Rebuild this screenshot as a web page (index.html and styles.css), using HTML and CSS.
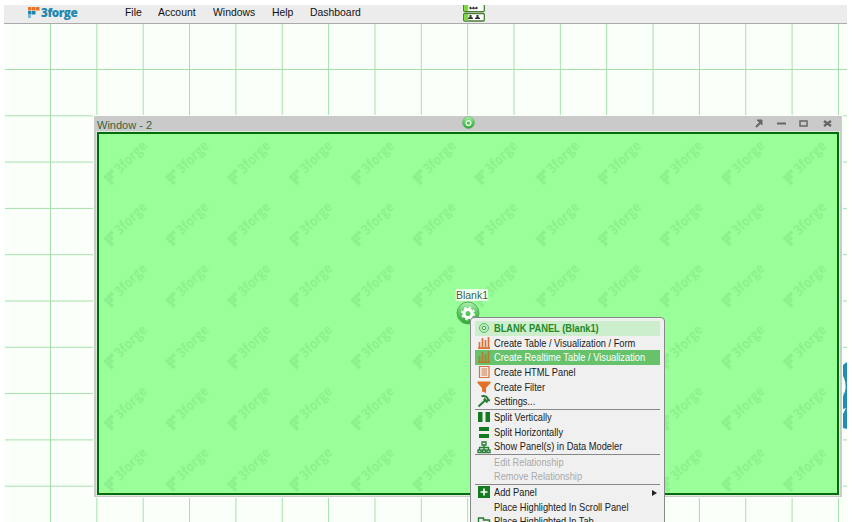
FILE: index.html
```html
<!DOCTYPE html>
<html lang="en">
<head>
<meta charset="utf-8">
<title>3forge</title>
<link rel="stylesheet" href="styles.css">
</head>
<body>
<div class="desktop">
  <header class="menubar">
    <div class="brand">
      <svg width="12" height="12" viewBox="0 0 12 12"><path fill="#e8742c" d="M0 0h3.500v3.500H0zM4 0h3.500v3.500H4zM8 0h3.500v3.500H8z"/><path fill="#1d87b0" d="M0 4h3.500v3.500H0zM4 4h3.500v3.500H4z"/><path fill="#79bad3" d="M0 8h3v3H0z"/></svg>
      <span class="brand-name">3forge</span>
    </div>
    <nav><span class="m1">File</span><span class="m2">Account</span><span class="m3">Windows</span><span class="m4">Help</span><span class="m5">Dashboard</span></nav>
    <svg class="status" width="22" height="17" viewBox="0 0 22 17"><g fill="#fff" stroke="#477c32" stroke-width="1.300"><path d="M.7-2v7.600q0 1 1 1h18.600q1 0 1-1V-2"/><rect x=".7" y="8.500" width="20.600" height="7.500" rx="1"/></g><path fill="#78dc35" d="M1.200 0h4v6h-4zM1.200 9h4v6.500h-4z"/><path fill="#333" d="M6 3l1.500-1.500L9 3l1.500-1.500L12 3l1.500-1.500L15 3l-1.500 1.500L12 3.500l-1.500 1L9 3.500l-1.500 1zM5 14v-1l1.500-1v-2h2v2l1.500 1v1zM12 14v-1l1.500-1v-2h2v2l1.500 1v1z"/></svg>
  </header>
  <main class="canvas">
    <svg class="grid" width="843" height="498"><defs><pattern id="cell" width="46.35" height="46.300" patternUnits="userSpaceOnUse" x="46" y="45"><path d="M.5 0v46.300M0 .5h46.350" stroke="#a5e0aa" fill="none"/></pattern></defs><rect x="1" width="842" height="498" fill="url(#cell)"/></svg>
    <svg class="backdrop-logo" width="5" height="67" viewBox="0 0 5 67"><path fill="#228db4" d="M0 3L4 0v67l-4-1V52l3-6-3 1V34c4-6 3-15 0-20z"/></svg>
    <section class="window">
      <div class="titlebar"><span>Window - 2</span>
        <svg class="orb" width="13" height="13" viewBox="0 0 24 24"><circle cx="12" cy="12" r="11" fill="url(#green)" stroke="#56ad56"/><circle cx="12" cy="13" r="4.500" fill="none" stroke="#e4fbe4" stroke-width="2.500"/></svg>
        <svg class="controls" width="78" height="10" viewBox="0 0 78 10" fill="none" stroke="#666"><path d="M1 8l5-5" stroke-width="2"/><path d="M2 1h5v5z" fill="#666"/><path d="M22 4.500h9" stroke-width="2"/><rect x="45" y="2" width="7" height="5" stroke-width="1.500"/><path d="M69 2l7 5M76 2l-7 5" stroke-width="2.300"/></svg>
      </div>
      <div class="panel">
        <svg width="738" height="358"><defs><pattern id="mark" width="61.750" height="61.400" patternUnits="userSpaceOnUse"><g transform="translate(13.500 46.500) rotate(-45)" fill="#8bf08c"><path d="M-4-9h3.600v3.600h-3.600zM0-9h3.600v3.600H0zM4-9h3.600v3.600H4zM-4-5h3.600v3.600h-3.600zM0-5h3.600v3.600H0zM-4-1h3.600v3.600h-3.600z"/><text x="10" y="1" textLength="39" lengthAdjust="spacingAndGlyphs">3forge</text></g></pattern></defs><rect width="738" height="358" fill="url(#mark)"/></svg>
      </div>
    </section>
    <div class="node"><span>Blank1</span>
      <svg width="24" height="24" viewBox="0 0 24 24"><defs><linearGradient id="green" x2="0" y2="1"><stop stop-color="#b4efb4"/><stop offset=".45" stop-color="#5dcc60"/><stop offset="1" stop-color="#2ea837"/></linearGradient></defs><circle cx="12" cy="12" r="11" fill="url(#green)" stroke="#58a95c"/><circle cx="12" cy="12.500" r="4" fill="none" stroke="#fff" stroke-width="3"/><circle cx="12" cy="12.500" r="6" fill="none" stroke="#fff" stroke-width="2" stroke-dasharray="2.400 2.310"/></svg>
    </div>
    <div class="menu">
      <div class="item heading"><svg viewBox="0 0 14 14"><circle cx="7" cy="7" r="4.500" fill="#bcecbc" stroke="#55bd5a"/><circle cx="7" cy="7" r="1.700" fill="#fff" stroke="#45a54a"/></svg><span>BLANK PANEL (Blank1)</span></div>
      <div class="item"><svg viewBox="0 0 14 14"><path stroke="#dc7137" stroke-width="1.700" d="M1 12.200h12M2.500 12V6M5.500 12V2M8.500 12V4M11.500 12V1"/></svg><span>Create Table / Visualization / Form</span></div>
      <div class="item selected"><svg viewBox="0 0 14 14"><path stroke="#b77b32" stroke-width="1.700" d="M1 12.200h12M2.500 12V6M5.500 12V2M8.500 12V4M11.500 12V1"/></svg><span>Create Realtime Table / Visualization</span></div>
      <div class="item"><svg viewBox="0 0 14 14"><path fill="none" stroke="#dc7137" stroke-width="1.200" d="M2.500 1.500h9.500v11H2.500zM4.500 4H10M4.500 6H10M4.500 8H10M4.500 10H10"/></svg><span>Create HTML Panel</span></div>
      <div class="item"><svg viewBox="0 0 14 14"><path fill="#e27028" d="M.5 1.500h13v1.500L9 8v5l-4-1.500V8L.5 3z"/></svg><span>Create Filter</span></div>
      <div class="item"><svg viewBox="0 0 14 14"><path fill="none" stroke="#277b35" stroke-width="2" d="M1.500 12.500l7.500-7M4.500 2.200q4-1 6 1.800l.5 2 2 .5M7 4.500l3.500 4"/></svg><span>Settings...</span></div>
      <hr>
      <div class="item"><svg viewBox="0 0 14 14"><path fill="#147b20" d="M1 2h4.500v10H1zM8.500 2H13v10H8.500z"/></svg><span>Split Vertically</span></div>
      <div class="item"><svg viewBox="0 0 14 14"><path fill="#147b20" d="M2 2h10v4H2zM2 9h10v4H2z"/></svg><span>Split Horizontally</span></div>
      <div class="item"><svg viewBox="0 0 14 14"><path fill="none" stroke="#277b35" stroke-width="1.300" d="M5 2h4v3H5zM7 5v5M2.500 10V7.500h9V10M1 10h3v2.500H1zM5.500 10h3v2.500h-3zM10 10h3v2.500h-3z"/></svg><span>Show Panel(s) in Data Modeler</span></div>
      <hr>
      <div class="item disabled"><span>Edit Relationship</span></div>
      <div class="item disabled"><span>Remove Relationship</span></div>
      <hr>
      <div class="item"><svg viewBox="0 0 14 14"><path fill="#147b20" d="M1 1h12v12H1z"/><path stroke="#fff" stroke-width="1.600" d="M3.500 7h7M7 3.500v7"/></svg><span>Add Panel</span><i class="arrow"></i></div>
      <div class="item"><span>Place Highlighted In Scroll Panel</span></div>
      <div class="item"><svg viewBox="0 0 14 14"><path fill="none" stroke="#277b35" stroke-width="1.400" d="M1.500 13V3h5v2h6v8z"/></svg><span>Place Highlighted In Tab</span></div>
    </div>
  </main>
</div>
</body>
</html>
```
FILE: styles.css
```css
* { box-sizing: border-box; }
body { margin: 0; background: #fff; font-family: "Liberation Sans", Arial, sans-serif; overflow: hidden; }
svg { display: block; flex: none; }
.desktop { width: 843px; height: 517px; margin: 5px 0 0 4px; overflow: hidden; }
.menubar { height: 19px; background: #ececec; border-bottom: 1px solid #aaa; display: flex; align-items: flex-start; position: relative; }
.brand { display: flex; width: 121px; height: 18px; padding: 2px 0 0 23.500px; gap: 1px; }
.brand-name { font: 800 13px/18px "Open Sans", sans-serif; color: #2189b0; margin-top: -4px; letter-spacing: -.5px; transform: scaleX(.9); transform-origin: left; height: 18px; }
nav { display: flex; font-size: 11.200px; line-height: 14px; color: #111; }
nav span { white-space: nowrap; transform: scaleX(.93); transform-origin: left; }
.m1 { width: 33px; } .m2 { width: 55px; } .m3 { width: 59px; } .m4 { width: 38px; }
.status { position: absolute; left: 459px; top: 0; }
.canvas { position: relative; height: 498px; background: #fafffa; }
.grid { position: absolute; }
.backdrop-logo { position: absolute; left: 839px; top: 338px; }
.window { position: absolute; left: 90px; top: 92px; width: 748px; height: 381px; background: #cacaca; padding: 0 2px 2px; outline: 1px solid #fafffa; }
.titlebar { height: 16px; font-size: 11px; line-height: 18px; color: #37643a; padding-left: 1px; position: relative; }
.orb { position: absolute; left: 365.500px; top: 0; }
.controls { position: absolute; left: 659px; top: 3px; }
.panel { height: 363px; border: 2px solid #006b0b; outline: 1px solid #deeade; margin: 0 1px; background: #99ff99; overflow: hidden; }
.panel text { font: bold 14px "Open Sans", sans-serif; }
.node { position: absolute; left: 446px; top: 265px; width: 44px; display: flex; flex-direction: column; align-items: center; font-size: 10.500px; color: #37643a; }
.node span { text-shadow: 0 0 2px #fff, 1px 1px 1px #fff, -1px -1px 1px #fff; background: #e9ffe9; height: 12px; line-height: 13px; }
.node svg { margin-right: 8px; }
.menu { position: absolute; left: 466px; top: 293px; width: 195px; height: 240px; background: #f0f0f0; border: 1px solid #888; border-radius: 4px; padding: 3px 4px 4px; color: #202020; font-size: 10.300px; }
.item { height: 14.700px; display: flex; align-items: center; position: relative; padding-left: 18.500px; white-space: nowrap; }
.item span { transform: scaleX(.9); transform-origin: left; line-height: 13px; }
.item svg { position: absolute; left: 2px; top: 0; width: 14px; height: 14px; }
.heading { background: #cceecc; color: #218a27; font-weight: bold; }
.selected { background: #66c26b; color: #fff; }
.disabled { color: #aaa; height: 14.500px; }
hr { border: 0; border-top: 1px solid #888; margin: 0; }
.arrow { position: absolute; right: 3px; border-left: 5px solid #222; border-top: 3.500px solid transparent; border-bottom: 3.500px solid transparent; }
```
